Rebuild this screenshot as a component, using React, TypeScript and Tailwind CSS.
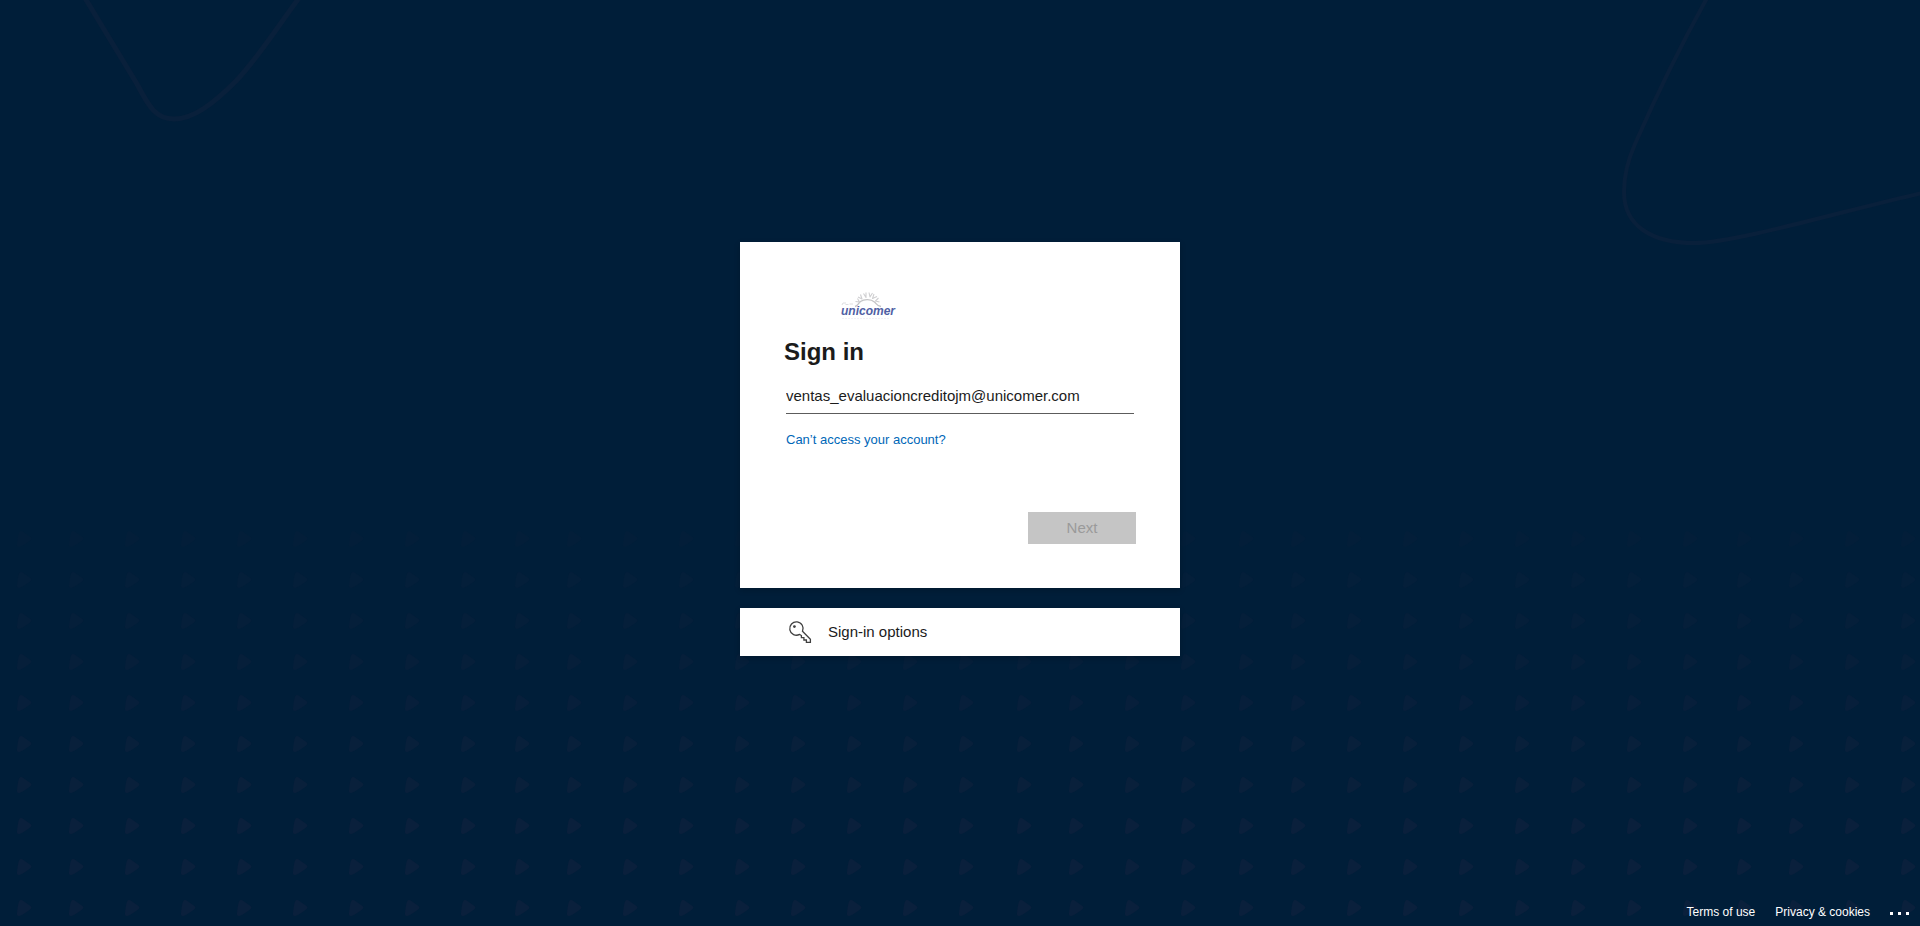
import { useState } from 'react';

const COLUMNS = [
  17, 69, 125, 181, 237, 293, 349, 405, 461, 515, 567, 623, 679, 735, 791, 847, 903, 959,
  1017, 1069, 1125, 1181, 1239, 1291, 1347, 1403, 1459, 1515, 1571, 1627, 1683, 1737,
  1789, 1845, 1901,
];
const ROWS = [531, 572, 613, 654, 695, 736, 777, 818, 859, 900];

function Backdrop() {
  return (
    <svg
      aria-hidden="true"
      className="absolute inset-0 h-full w-full"
      viewBox="0 0 1920 926"
      preserveAspectRatio="xMidYMid slice"
    >
      <g fill="none" stroke="#09203b">
        <path
          strokeWidth="5"
          d="M85 -2 L137 84 C149 107 156 119 174 119 C194 119 214 103 236 81 C258 58 276 29 299 -2"
        />
        <path
          strokeWidth="4"
          d="M1707 -2 C1682 43 1657 94 1635 144 C1627 162 1624 176 1624 192 C1624 226 1652 243 1694 243 C1736 243 1850 209 1922 193"
        />
      </g>
      <g fill="#0a203c">
        {ROWS.map((y, row) =>
          COLUMNS.map((x) => (
            <path
              key={`${x}-${y}`}
              opacity={0.3 + (0.7 * Math.min(row, 7)) / 7}
              transform={`translate(${x} ${y})`}
              d="M2 1.8 C2.6 0 4.4 -0.4 6 0.8 L13.4 6 C14.6 7 14.6 8.2 13.4 9.2 C10.4 11.6 6.8 14.2 3 15.8 C1 16.6 -0.4 15.6 0 13.6 C0.4 9.4 0.8 5 2 1.8 Z"
            />
          )),
        )}
      </g>
    </svg>
  );
}

function Logo() {
  return (
    <svg role="img" aria-label="Unicomer" className="ml-14 h-9 w-16" viewBox="0 0 64 36">
      <g fill="none" stroke="#c4c4c6">
        <path strokeWidth="1.3" d="M15 20.5 C18 20 18 17.5 20.5 15.5 C24 13 31 13 34.5 16 C36.5 18 37 20 41 20.5" />
        <path
          strokeWidth="1.1"
          strokeLinejoin="round"
          stroke="#cfcfd1"
          d="M15.5 15.5 L19.5 16 L17.5 12.5 M18 11 L22 13 L20.5 8.5 M23.5 7.5 L26 11.5 L26 6.5 M29 6.5 L30 11 L32.5 7 M34 8 L32.5 12.5 L37 10.5 M38.5 12 L35.5 15 L39.5 16"
        />
        <path strokeWidth="1" stroke="#dedee0" d="M2 19 L3 17 H6 M5.5 18.5 H8.5 M9.5 18 H13" />
        <path strokeWidth="1" stroke="#f3f1f6" strokeDasharray="2 1" d="M2 32.5 H50" />
      </g>
      <text
        x="1"
        y="29"
        fontFamily="Liberation Sans, Arial, sans-serif"
        fontSize="12"
        fontWeight="700"
        fontStyle="italic"
        fill="#4f60a4"
      >
        unicomer
      </text>
    </svg>
  );
}

function KeyIcon() {
  return (
    <svg aria-hidden="true" className="h-8 w-8" viewBox="0 0 32 32" fill="none" stroke="#404040" strokeWidth="1.3">
      <path d="M18.5 15.3 L26.4 23.3 V26.4 H22.4 V24 H19.9 V21.6 H17.4 V19.5 L15.6 18.4 A6.7 6.7 0 1 1 18.5 15.3 Z" />
      <circle cx="10.4" cy="10.6" r="1.4" fill="#404040" stroke="none" />
    </svg>
  );
}

export default function App() {
  const [email, setEmail] = useState('ventas_evaluacioncreditojm@unicomer.com');

  return (
    <div className="relative flex min-h-screen flex-col bg-[#001e39] font-['Liberation_Sans',Arial,sans-serif] text-[15px] text-[#1b1b1b]">
      <Backdrop />
      <main className="relative flex flex-1 flex-col items-center justify-center gap-5">
        <form
          className="w-full max-w-[440px] bg-white p-11 shadow-[0_2px_6px_rgba(0,0,0,0.2)]"
          onSubmit={(e) => e.preventDefault()}
        >
          <Logo />
          <h1 className="mt-4 text-2xl leading-7 font-bold">Sign in</h1>
          <div className="mx-0.5 mt-3">
            <input
              type="email"
              aria-label="Email address"
              value={email}
              onChange={(e) => setEmail(e.target.value)}
              className="block h-9 w-full border-b border-[#5c5c5c] bg-transparent outline-none"
            />
            <a href="#recover" className="mt-4 block text-[13px] leading-5 text-[#0067b8]">
              Can’t access your account?
            </a>
          </div>
          <div className="mt-[62px] flex justify-end">
            <button type="submit" disabled className="h-8 w-[108px] bg-[#c5c5c5] text-[#9a9a9a]">
              Next
            </button>
          </div>
        </form>
        <button
          type="button"
          className="flex h-12 w-full max-w-[440px] items-center gap-3 bg-white px-11 shadow-[0_2px_6px_rgba(0,0,0,0.2)]"
        >
          <KeyIcon />
          Sign-in options
        </button>
      </main>
      <footer className="relative flex h-7 items-center justify-end gap-5 pr-2.5 text-xs text-white">
        <a href="#terms">Terms of use</a>
        <a href="#privacy">Privacy &amp; cookies</a>
        <button type="button" aria-label="More information" className="h-7">
          <svg className="h-7 w-5" viewBox="0 0 20 28" fill="#ffffff">
            <rect x="0" y="14" width="3" height="3" />
            <rect x="8" y="14" width="3" height="3" />
            <rect x="16" y="14" width="3" height="3" />
          </svg>
        </button>
      </footer>
    </div>
  );
}
